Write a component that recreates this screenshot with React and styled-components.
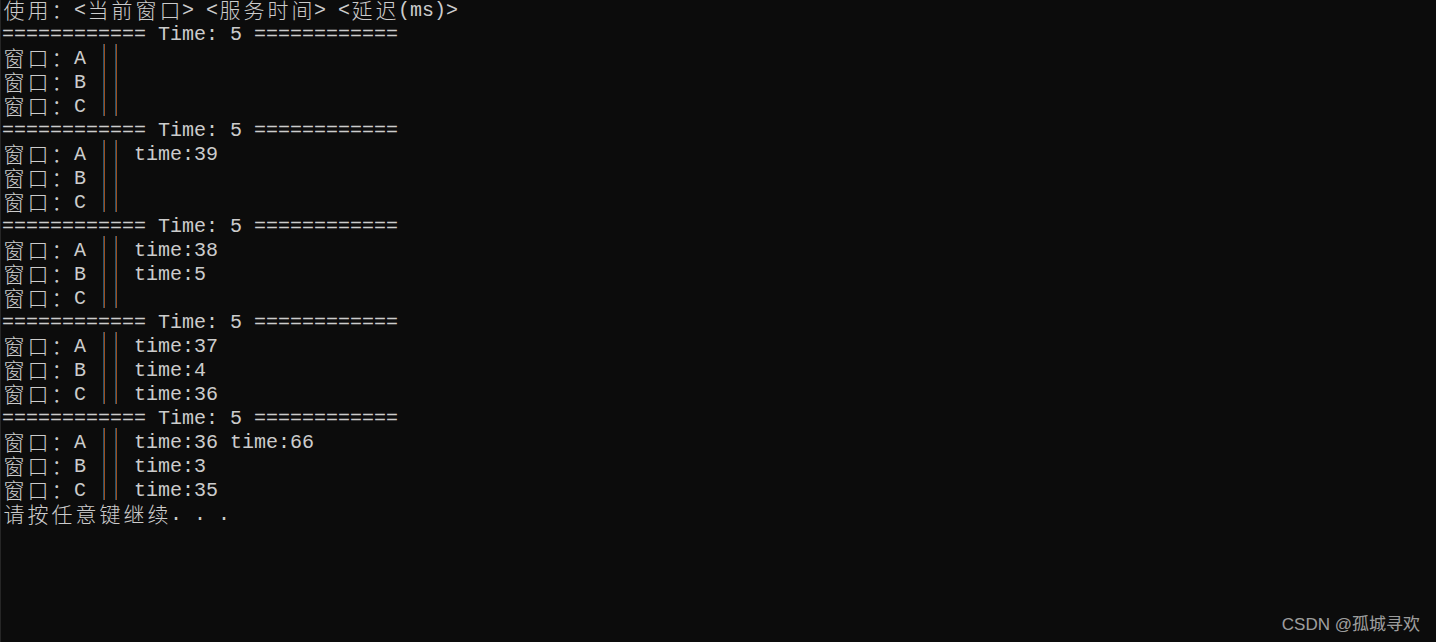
import React from "react";
import styled, { createGlobalStyle } from "styled-components";

const GlobalStyle = createGlobalStyle`
  html, body {
    margin: 0;
    padding: 0;
    background: #0c0c0c;
  }
`;

const Screen = styled.div`
  position: relative;
  min-height: 100vh;
  box-sizing: border-box;
  background: #0c0c0c;
  border-left: 1px solid #262626;
  padding-left: 1px;
  overflow: hidden;
`;

const Output = styled.div`
  display: flex;
  flex-direction: column;
  margin-top: -4px;
  color: #cccccc;
`;

const Row = styled.div`
  display: flex;
  height: 24px;
  align-items: center;
`;

const Cell = styled.span`
  position: relative;
  display: inline-flex;
  justify-content: center;
  align-items: center;
  flex-shrink: 0;
  box-sizing: border-box;
  width: ${(p) => (p.$wide ? "24px" : "12px")};
  height: 24px;
  padding-top: ${(p) => (p.$wide ? "3px" : "4px")};
  line-height: 21px;
  font-family: ${(p) =>
    p.$wide
      ? `"Noto Sans CJK SC", sans-serif`
      : `"Liberation Mono", "DejaVu Sans Mono", monospace`};
  font-size: ${(p) => (p.$wide ? "21px" : "20px")};
  font-weight: ${(p) => (p.$wide ? 300 : 400)};
  white-space: pre;
`;

const Bar = styled(Cell)`
  &::before {
    content: "";
    position: absolute;
    left: 5px;
    top: 0;
    bottom: 0;
    width: 2px;
    background: linear-gradient(to right, #24526e 50%, #9c4f1f 50%);
  }
`;

const Watermark = styled.div`
  position: absolute;
  right: 16px;
  bottom: 9px;
  font-family: "Liberation Sans", "Noto Sans CJK SC", sans-serif;
  font-size: 17px;
  line-height: 1;
  color: rgba(255, 255, 255, 0.62);
`;

const SEP = "============ Time: 5 ============";

const lines = [
  "使用：<当前窗口> <服务时间> <延迟(ms)>",
  SEP,
  "窗口：A ||",
  "窗口：B ||",
  "窗口：C ||",
  SEP,
  "窗口：A || time:39",
  "窗口：B ||",
  "窗口：C ||",
  SEP,
  "窗口：A || time:38",
  "窗口：B || time:5",
  "窗口：C ||",
  SEP,
  "窗口：A || time:37",
  "窗口：B || time:4",
  "窗口：C || time:36",
  SEP,
  "窗口：A || time:36 time:66",
  "窗口：B || time:3",
  "窗口：C || time:35",
  "请按任意键继续. . .",
];

// full-width chars take two console columns
const isWide = (ch) => ch.charCodeAt(0) > 0x2e80;

const ConsoleLine = ({ text }) => (
  <Row>
    {Array.from(text).map((ch, i) =>
      ch === "|" ? (
        <Bar key={i} />
      ) : (
        <Cell key={i} $wide={isWide(ch)}>
          {ch}
        </Cell>
      )
    )}
  </Row>
);

export default function App() {
  return (
    <>
      <GlobalStyle />
      <Screen>
        <Output>
          {lines.map((l, i) => (
            <ConsoleLine key={i} text={l} />
          ))}
        </Output>
        <Watermark>CSDN @孤城寻欢</Watermark>
      </Screen>
    </>
  );
}
